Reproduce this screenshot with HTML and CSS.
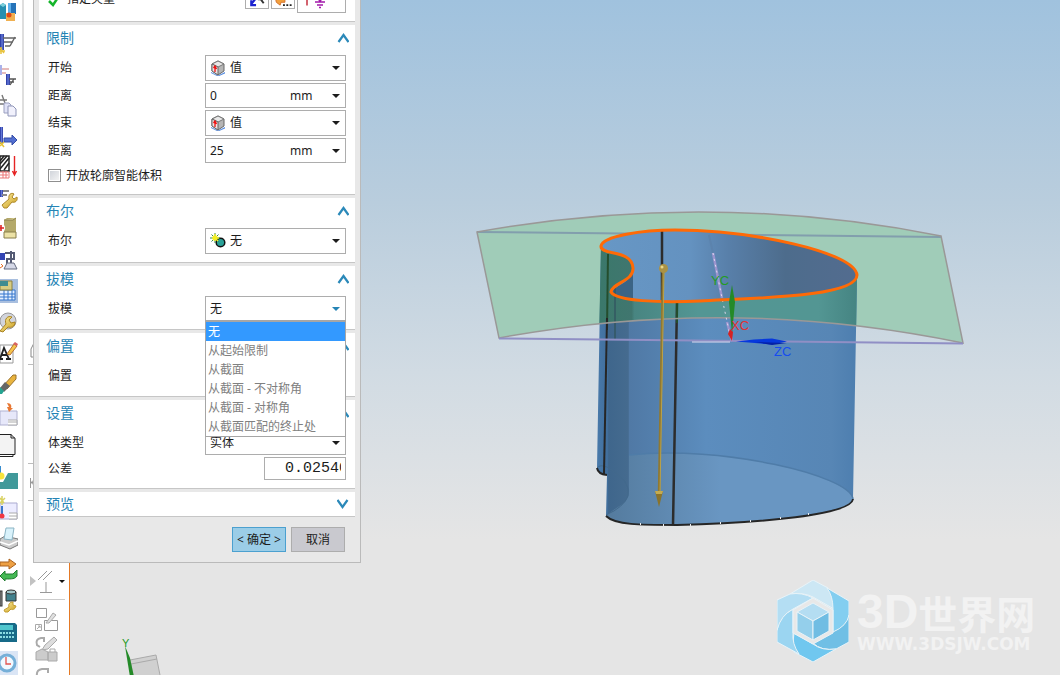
FILE: index.html
```html
<!DOCTYPE html>
<html lang="zh-CN">
<head>
<meta charset="utf-8">
<title>拉伸</title>
<link rel="stylesheet" href="styles.css">
</head>
<body>
<svg class="defs" aria-hidden="true">
  <defs>
    <linearGradient id="metal" x1="0" x2="1"><stop offset="0" stop-color="#20309a"/><stop offset=".5" stop-color="#6478d8"/><stop offset="1" stop-color="#28389c"/></linearGradient>
    <linearGradient id="gold" x1="0" y1="0" x2="1" y2="1"><stop offset="0" stop-color="#fff2a8"/><stop offset="1" stop-color="#c89a18"/></linearGradient>
    <symbol id="arrow" viewBox="0 0 8 4"><path d="M0 0h8L4 4z" fill="currentColor"/></symbol>
    <symbol id="chevron" viewBox="0 0 12 10"><path d="M1.500 9 6.500 2l5 7" fill="none" stroke="#2b89b9" stroke-width="2.2"/></symbol>
    <symbol id="cube" viewBox="0 0 14 16"><path d="M0 12 7 15.500 14 12v1.500L7 16.500 0 13z" fill="#5a8ee0"/><path d="M1 4 7 1l6 3v7l-6 4-6-4z" fill="#b5b5b5" stroke="#666"/><path d="M1 4 7 1l6 3-6 3z" fill="#e8e8e8" stroke="#777"/><path d="M1 4l6 3v8l-6-4z" fill="#f0e2e2" stroke="#666"/><path d="M4 12V6M2.500 8 4 6l1.500 3" stroke="#e11" fill="none" stroke-width="1.300"/></symbol>
    <symbol id="spark" viewBox="0 0 16 16"><circle cx="10.500" cy="9.500" r="4.300" fill="#2aa198" stroke="#111" stroke-width="1.500"/><path d="M5 0v10M0 5h10M1.500 1.500l7 7M8.500 1.500l-7 7" stroke="#368a4a" stroke-width="1"/><path d="M5 1v7M2 5h7M3 3l5 5M7 3 3 7" stroke="#f4ee20" stroke-width="1.500"/></symbol>
  </defs>
</svg>
<div class="app">
  <nav class="toolbar" aria-label="特征">
    <button aria-label="特征 1"><svg viewBox="0 0 18 24"><path d="M0 5l3-2 3 2v14H0z" fill="#278fb0"/><path d="M0 5l3-2 3 2-3 2z" fill="#7cd0dc"/><path d="M8 3h8v11H8z" fill="#2673b8"/><path d="M8 3h3v11H8z" fill="#5eb0ea"/><path d="M6 13h9v8H6z" fill="#f0b050"/><circle cx="9" cy="15" r="2.500" fill="#e04818"/></svg></button>
    <button aria-label="特征 2"><svg viewBox="0 0 18 24"><path d="M0 3h4v16H0z" fill="url(#metal)"/><path d="M3 7h13M4 11h9M5 15h5M15 6l-5 9" stroke="#666" fill="none" stroke-width="1.500"/><path d="M1 16v7M0 20h5M0 17l4 5" stroke="#e8c23a" stroke-width="1.500"/></svg></button>
    <button aria-label="特征 3"><svg viewBox="0 0 18 24"><path d="M0 3h2v10H0z" fill="#aab2ea"/><path d="M2 7h7M2 11h4" stroke="#cc7878"/><path d="M6 12h4v11H6z" fill="url(#metal)"/><path d="M9 17h7M10 20h4M14 17l-4 6" stroke="#555" stroke-width="1.300"/></svg></button>
    <button aria-label="特征 4"><svg viewBox="0 0 18 24"><path d="M0 7h7M0 11h5M2 2l3 8" stroke="#777" stroke-width="1.400"/><path d="M4 10h5l2 2v8H4z" fill="#e0e2f6" stroke="#9ba0bf"/><path d="M8 13h5l3 3v7H8z" fill="#f1f1fc" stroke="#8f95b8"/></svg></button>
    <button aria-label="特征 5"><svg viewBox="0 0 18 24"><path d="M0 3h3v17H0z" fill="url(#metal)"/><path d="M4 14h8v-3l5 5-5 5v-3H4z" fill="#526fd0" stroke="#344da8"/><path d="M0 18l4 5M0 22l4-4" stroke="#e7c235" stroke-width="1.500"/></svg></button>
    <button aria-label="特征 6"><svg viewBox="0 0 18 24"><path d="M0 1h9v15H0z" fill="#fff" stroke="#222" stroke-width="1.500"/><path d="M0 9 7 1M0 14 9 3M4 15l5-7M0 6l4-5" stroke="#222" stroke-width="1.500"/><path d="M0 17h9v6H0M0 20h8M3 16v7M6 16v7" stroke="#ed7777" fill="none"/><path d="M14.500 1v18M12.500 16l2 4 2-4" stroke="#e62424" fill="none" stroke-width="1.400"/></svg></button>
    <button aria-label="特征 7"><svg viewBox="0 0 18 24"><path d="M0 4h3v7H0z" fill="url(#metal)"/><path d="M3 5h6M2 9h5" stroke="#888" stroke-width="2"/><path d="M4 22l-2-3 7-6c-1-4 2-7 5-5l-2 3 2 2 3-2c1 4-2 6-5 5l-5 6z" fill="url(#gold)" stroke="#ad8829"/></svg></button>
    <button aria-label="特征 8"><svg viewBox="0 0 18 24"><path d="M4 3l3-2h9v18H4z" fill="#b4a96a"/><path d="M4 3h9l3-2M4 15h12v6H4z" fill="#ece2a6" stroke="#887e4c"/><circle cx="1" cy="11" r="4" fill="#fff"/><path d="M0 11h4M1 8v6" stroke="#dc2525" stroke-width="1.600"/></svg></button>
    <button aria-label="特征 9"><svg viewBox="0 0 18 24"><path d="M0 5h5v7H0z" fill="#3345b4"/><path d="M5 5h9v6H7v6M11 3v12" stroke="#555b74" fill="none" stroke-width="2"/><path d="M7 15h7l3 6H4z" fill="#d6d9e8" stroke="#666c80"/><path d="M0 20l3-2-2-2" stroke="#e66f27" fill="none"/></svg></button>
    <button aria-label="特征 10"><svg viewBox="0 0 18 24"><path d="M0 0h18v24H0z" fill="#a9bfdf"/><path d="M0 11h15v10H0M4 10v11M8 10v11M12 10v11M0 15h15M0 18h15" stroke="#3275cc" fill="#e5f0ff"/><path d="M0 2h12v9H0z" fill="#d8cd82" stroke="#8c8043"/><path d="M0 2h8v5H0z" fill="#3f8c90"/></svg></button>
    <button aria-label="特征 11"><svg viewBox="0 0 18 24"><circle cx="8" cy="11" r="8" fill="#d2d4dc" stroke="#999"/><path d="M0 21l6-7c-2-5 2-9 6-7L9 10l2 3 4-1c0 5-4 6-7 5l-5 5z" fill="url(#gold)" stroke="#aa8424"/></svg></button>
    <button aria-label="文本"><svg viewBox="0 0 18 24"><path d="M0 4h13v18H0z" fill="#fff" stroke="#999"/><path d="M0 18 4 7l5 11M1 14h6M-1 18h4M6 18h5" stroke="#222" fill="none" stroke-width="1.800"/><path d="M7 13 14 3l3 2-7 9z" fill="#f5c44b" stroke="#b86f32"/><path d="M13 3l2-2 3 2-1 2z" fill="#d86262"/></svg></button>
    <button aria-label="编辑"><svg viewBox="0 0 18 24"><path d="M3 14 13 3l3 0 0 4L7 17z" fill="#e9b43f" stroke="#9b722c"/><path d="M0 16 5 10l5 4-6 6z" fill="#666"/><path d="M0 15l4 4-2 3H0z" fill="#25a491"/></svg></button>
    <button aria-label="特征 14"><svg viewBox="0 0 18 24"><path d="M0 8h17v14H0z" fill="#e7e8fa" stroke="#b0b1d1"/><path d="M8 17h9v5H8M8 19h9" fill="#fff" stroke="#aaa"/><path d="M7 0c4 0 5 3 4 5h2l-4 4-2-5h2z" fill="#e87834"/></svg></button>
    <button aria-label="图纸"><svg viewBox="0 0 18 24"><path d="M0 .5h11l4 4v16H0" fill="#f3f3f3" stroke="#222"/><path d="M0 22.500h13v-2M11 0v4h4" fill="none" stroke="#222"/></svg></button>
    <button aria-label="特征 16"><svg viewBox="0 0 18 24"><path d="M0 24v-7h3l5-9h10v16z" fill="#40999a"/><path d="M0 1v8" stroke="#378ccf" stroke-width="2"/><circle cx="1" cy="11" r="3.500" fill="#f6e43c"/></svg></button>
    <button aria-label="特征 17"><svg viewBox="0 0 18 24"><path d="M0 7h17v16H0z" fill="#ececff" stroke="#aaaad0"/><path d="M9 17h8v6H9M9 20h8" fill="#fff" stroke="#aaa"/><path d="M2 10v9" stroke="#3976cc" stroke-width="2"/><circle cx="2" cy="20" r="2.500" fill="#f23443"/><path d="M0 2l4 5M0 7l5-5M2 0v9" stroke="#d9d261" stroke-width="1.500"/></svg></button>
    <button aria-label="打印"><svg viewBox="0 0 18 24"><path d="M0 12l5-3 13 3v6l-8 4-10-4z" fill="#ccc" stroke="#777"/><path d="M4 12 6 1h8l-2 12z" fill="#d9f2fb" stroke="#8bb4c4"/><path d="M0 15l9 3 9-4" stroke="#fff" stroke-width="1.500" fill="none"/></svg></button>
    <button aria-label="替换"><svg viewBox="0 0 18 24"><path d="M0 4h9V1l7 5-7 5V8H0z" fill="#eda044" stroke="#aa6320"/><path d="M17 12v6c-2 3-5 3-12 3v2l-5-5 5-5v3h8z" fill="#45b955" stroke="#207c30"/></svg></button>
    <button aria-label="特征 20"><svg viewBox="0 0 18 24"><rect y="2" width="2" height="15" fill="#999" stroke="#333"/><path d="M6 3h10v9H6z" fill="#42818d" stroke="#333"/><ellipse cx="11" cy="3" rx="5" ry="2" fill="#a3c6c9" stroke="#333"/><path d="M5 23l-1-2 5-3c-1-3 1-5 4-5v3l3 1c-1 4-4 4-5 3l-3 3z" fill="url(#gold)" stroke="#c39d2f"/></svg></button>
    <button aria-label="表达式"><svg viewBox="0 0 18 24"><path d="M0 3h15l2 2v17H0z" fill="#176a88"/><path d="M0 5h13v5H0z" fill="#50c6ce"/><path d="M0 13h15M0 17h15" stroke="#8adbe2" stroke-width="2" stroke-dasharray="2 1"/></svg></button>
    <button aria-label="历史"><svg viewBox="0 0 18 24"><path d="M0 0h18v24H0z" fill="#dae5f5"/><circle cx="7" cy="12" r="8" fill="#f1f9ff" stroke="#75afd8" stroke-width="3"/><path d="M6 6v7h5" stroke="#e25550" fill="none" stroke-width="1.300"/></svg></button>
  </nav>
  <div class="sketchbar">
    <svg class="sketch-back" viewBox="0 0 46 563"><g fill="none" stroke="#bcbcbc"><path d="M20 341h-7q-4 2-6 8v8h12" stroke="#888"/><path d="M4 364.500h20M4 463.500h20M4 500.500h20"/><path d="M6.500 478v10M7 482.500h5M10 480l-3 2.500 3 2.500" stroke="#999"/></g></svg>
    <button class="constraint" aria-label="几何约束"><svg viewBox="0 0 40 34"><path d="M2 13v10l6-5z" fill="#c2c2c2"/><path d="M10 17 19 8M15 17 24 8M18 19v10M12 29.500h12" fill="none" stroke="#999"/><path d="M31 17h6l-3 3z" fill="#111"/></svg></button>
    <hr>
    <button class="tool" aria-label="阵列曲线"><svg viewBox="0 0 26 28"><path d="M3.500 4.500h10v9h-10zM11.500 16.500h13v10h-13z" fill="#fff" stroke="#999"/><path d="M2.500 20.500h6v6h-6zM4 25l3-3M5 22h2v2" fill="none" stroke="#aaa"/><path d="M13 19 20 9l3 2-7 8z" fill="#e0e0e0" stroke="#aaa"/></svg></button>
    <button class="tool" aria-label="偏置曲线"><svg viewBox="0 0 26 28"><path d="M11 7V3H8q-6 1-4 7l3 2" stroke="#aaa" fill="none" stroke-width="2"/><path d="M12 10 21 2l3 3-9 9-6 1z" fill="#ddd" stroke="#aaa"/><path d="M3 17l6-3 6 3v8H3zM15 17h9v9h-9z" fill="#ccc" stroke="#aaa"/><path d="M17 17v-3h5v3" fill="none" stroke="#aaa"/></svg></button>
    <button class="tool" aria-label="镜像曲线"><svg viewBox="0 0 26 28"><path d="M15 7V3H9q-6 1-5 7" stroke="#aaa" fill="none" stroke-width="2"/></svg></button>
  </div>
  <main class="viewport">
    <svg class="scene" viewBox="70 0 990 675" preserveAspectRatio="xMinYMin slice" role="img" aria-label="拉伸预览">
      <defs>
        <linearGradient id="wall" gradientUnits="userSpaceOnUse" x1="597" x2="857" y1="0" y2="0"><stop offset="0" stop-color="#4879aa"/><stop offset=".04" stop-color="#416f9d"/><stop offset=".045" stop-color="#3f668c"/><stop offset=".12" stop-color="#456b8f"/><stop offset=".125" stop-color="#5079a5"/><stop offset=".3" stop-color="#5684b3"/><stop offset=".42" stop-color="#5c8dbe"/><stop offset=".9" stop-color="#5786b5"/><stop offset="1" stop-color="#4d7eaf"/></linearGradient>
        <linearGradient id="inside" gradientUnits="userSpaceOnUse" x1="601" x2="857" y1="0" y2="0"><stop offset="0" stop-color="#6797c5"/><stop offset=".35" stop-color="#6492c0"/><stop offset=".5" stop-color="#587fa9"/><stop offset=".72" stop-color="#4d6c8c"/><stop offset="1" stop-color="#536c8f"/></linearGradient>
        <linearGradient id="teal" gradientUnits="userSpaceOnUse" x1="601" x2="857" y1="0" y2="0"><stop offset="0" stop-color="#3b786b"/><stop offset=".12" stop-color="#40766f"/><stop offset=".13" stop-color="#488581"/><stop offset=".38" stop-color="#539694"/><stop offset=".85" stop-color="#539693"/><stop offset="1" stop-color="#458482"/></linearGradient>
        <linearGradient id="floor" gradientUnits="userSpaceOnUse" x1="607" x2="720" y1="0" y2="0"><stop offset="0" stop-color="#547b9e"/><stop offset="1" stop-color="#6996c2"/></linearGradient>
        <clipPath id="plane"><path d="M477 232Q710 190 941 236L963 343Q730 295 499 338Z"/></clipPath>
      </defs>
      <path d="M477 232Q710 190 941 236L963 343Q730 295 499 338Z" fill="#a0ccb8"/>
      <path d="M477 232 941 237" stroke="#829ead" stroke-width="2"/>
      <path d="M601 246 597 468Q598 474 607 475L606 516C615 525 640 525 677 525C760 523 851 515 853 499L857 275C840 300 650 310 634 292L634 256Z" fill="url(#wall)"/>
      <path d="M629 455C720 445 850 475 853 499C851 515 760 523 677 525C640 525 615 525 606 516C615 507 629 504 629 492Z" fill="url(#floor)"/>
      <path d="M597 468q3-4 10-1 25 14 21 29-4 11-22 19" fill="none" stroke="#42698c"/>
      <path d="M629 455C720 445 850 475 853 499" fill="none" stroke="#4f7ca8" stroke-width="1.500"/>
      <g clip-path="url(#plane)"><path d="M601 246 599 340H856L857 275C840 300 650 310 634 292L634 256Z" fill="url(#teal)"/></g>
      <path d="M601 246C603 236 642 230 675 230C750 230 855 252 857 275C857 297 755 298 700 301C660 303 616 301 611 292C612 283 634 281 633 268C632 249 600 256 601 246Z" fill="url(#inside)"/>
      <path d="M633 268q-1 11-13 17-10 5-8 9 5 5 21 7z" fill="#3c6485"/>
      <path d="M608 254 607 330" stroke="#244e2e" stroke-width="2"/><path d="M607 318 604 474" stroke="#262626" stroke-width="2"/>
      <path d="M615 288v52" stroke="#335762" stroke-width="1.500"/>
      <path d="M662 231v70M677 303l-1 55-3 167" stroke="#2c2c2c" stroke-width="2.500" fill="none"/>
      <path d="M677 303v20" stroke="#244c2c" stroke-width="2"/>
      <path d="M597 468Q598 474 607 475M606 516C615 525 640 525 677 525C760 523 851 515 853 499" fill="none" stroke="#262626" stroke-width="2"/>
      <path d="M640 524h1M663 525h1M690 525h1M720 523h1M750 521h1M780 518h1M808 514h1" stroke="#eee" stroke-width="2"/>
      <path d="M477 232Q710 190 941 236L963 343Q730 295 499 338Z" fill="none" stroke="#9a9897" stroke-width="1.500"/>
      <path d="M499 338.500 963 343.500" stroke="#908fc5" stroke-width="2"/>
      <path d="M692 342h38" stroke="#ddd9ef"/>
      <path d="M709 235l4 18" stroke="#5c83ad" stroke-width="2"/><path d="M713 253l9 45M727 322l5 19" stroke="#9b94ce" stroke-width="2.500"/><path d="M713 253l9 45 9 42" stroke="#ddd8ee" stroke-dasharray="2 4" fill="none"/>
      <path d="M601 246C603 236 642 230 675 230C750 230 855 252 857 275C857 297 755 298 700 301C660 303 616 301 611 292C612 283 634 281 633 268C632 249 600 256 601 246Z" fill="none" stroke="#ff6a06" stroke-width="3"/>
      <path d="M663 270l-4 224" stroke="#907932" stroke-width="2.500"/><path d="M664 270l-4 224" stroke="#bba248"/>
      <circle cx="663.500" cy="268.500" r="4.500" fill="#aa9245"/><circle cx="662" cy="267" r="1.500" fill="#ead78b"/><path d="M655 491h8l-4 16z" fill="#8a732b"/><path d="M655 491h8l-1 3h-6z" fill="#c4ab50"/>
      <path d="M732 285l3 17-3 32-3-32z" fill="#248a28"/><path d="M728 334l2-5 3 3-1 9z" fill="#d52222"/>
      <path d="M736 341.500l18-2 18-1 15 3-15 3z" fill="#0638dd"/><path d="M755 342l32 1-15 2z" fill="#0521a6"/>
      <g class="axis"><text x="711" y="285" fill="#259b25">YC</text><text x="731" y="330" fill="#e13232">XC</text><text x="774" y="356" fill="#164cf0">ZC</text></g>
      <path d="M130 660l26-5 5 25h-27z" fill="#d0d0d0" stroke="#aaa"/><path d="M131 664l26-5" stroke="#aaa"/>
      <path d="M125 646l5 12 4 19h-4z" fill="#248a28"/><text class="triad" x="122" y="647" fill="#259b25">Y</text>
    </svg>
    <div class="watermark">
      <svg viewBox="0 0 72 82"><g stroke="#e8f3f8" stroke-width="1"><path d="M13 14 36 0l15 8q6 12 6 21L36 17q-10-5-23-3z" fill="#cce7f4"/><path d="M50 8 72 21v26q-3 5-16 9V29q0-13-6-21z" fill="#83cef0"/><path d="M72 35v27L59 69q-15 2-23-6l20-11Q70 46 72 35z" fill="#70bfe5"/><path d="M17 53 36 64q9 7 23 5L36 82 17 72q-2-9 0-19z" fill="#70c7ef"/><path d="M0 51q1-14 16-22v24q-1 11 6 21L0 62z" fill="#9bd5f1"/><path d="M0 20l13-6q12-2 23 4L16 29Q4 35 0 50z" fill="#b4def3"/><path d="M36 18 56 30v23L36 64 16 53V30z" fill="#e8e8e8"/><path d="M20 32 36 23l16 9-16 9z" fill="#b4ddf2"/><path d="M20 32l16 9v19l-16-9z" fill="#94cfeb"/><path d="M36 41l16-9v19l-16 9z" fill="#70bde3"/></g></svg>
      <div class="brand"><div class="brand-name"><b>3D</b><span>世界网</span></div><div class="brand-url">WWW.3DSJW.COM</div></div>
    </div>
  </main>

  <form class="dialog" aria-label="拉伸">
    <section class="panel direction">
      <div class="row">
        <span class="vector-label"><svg viewBox="0 0 12 12"><path d="M1 6l4 4 6-9" stroke="#15b52a" stroke-width="2.500" fill="none"/></svg>指定矢量</span>
        <div class="vector-tools">
          <button type="button" aria-label="反向"><svg viewBox="0 0 22 22"><path d="M5 18 12 9M5 14v5h5" stroke="#1b22d0" stroke-width="2.300" fill="none"/><path d="M12 13h5M15 13l3 4" stroke="#333" stroke-width="2"/></svg></button>
          <button type="button" aria-label="矢量对话框"><svg viewBox="0 0 22 22"><path d="M3 11h10v5H9l-1 3-4-3z" fill="#f2a03d" stroke="#d4702d"/><path d="M11 19h2M14.500 19h2M18 19h2" stroke="#222" stroke-width="2"/></svg></button>
          <button type="button" class="vector-type" aria-label="矢量类型"><svg viewBox="0 0 47 24"><path d="M9 8v10" stroke="#c52e3e" stroke-width="1.500"/><path d="M22 8v6M17 14.500h10M19 17.500h6M21 20h2M20 11l2 3 2-3" stroke="#a21aab" stroke-width="1.300" fill="none"/></svg></button>
        </div>
      </div>
    </section>
    <section class="panel limits">
      <h2>限制<button type="button" aria-label="折叠限制"><svg><use href="#chevron"/></svg></button></h2>
      <div class="rows">
        <div class="row"><label for="start">开始</label><div class="field"><svg class="kind"><use href="#cube"/></svg><select id="start"><option>值</option></select><svg class="caret"><use href="#arrow"/></svg></div></div>
        <div class="row short"><label for="d1">距离</label><div class="field"><input id="d1" value="0"><select class="unit" aria-label="单位"><option>mm</option></select><svg class="caret"><use href="#arrow"/></svg></div></div>
        <div class="row"><label for="end">结束</label><div class="field"><svg class="kind"><use href="#cube"/></svg><select id="end"><option>值</option></select><svg class="caret"><use href="#arrow"/></svg></div></div>
        <div class="row short"><label for="d2">距离</label><div class="field"><input id="d2" value="25"><select class="unit" aria-label="单位"><option>mm</option></select><svg class="caret"><use href="#arrow"/></svg></div></div>
      </div>
      <label class="check"><input type="checkbox">开放轮廓智能体积</label>
    </section>
    <section class="panel">
      <h2>布尔<button type="button" aria-label="折叠布尔"><svg><use href="#chevron"/></svg></button></h2>
      <div class="row"><label for="bool">布尔</label><div class="field"><svg class="kind"><use href="#spark"/></svg><select id="bool"><option>无</option></select><svg class="caret"><use href="#arrow"/></svg></div></div>
    </section>
    <section class="panel">
      <h2>拔模<button type="button" aria-label="折叠拔模"><svg><use href="#chevron"/></svg></button></h2>
      <div class="row short"><label for="draft">拔模</label><div class="field open"><select id="draft"><option>无</option></select><svg class="caret"><use href="#arrow"/></svg>
        <ul class="menu" role="listbox" aria-label="拔模"><li role="option" aria-selected="true">无</li><li role="option">从起始限制</li><li role="option">从截面</li><li role="option">从截面 - 不对称角</li><li role="option">从截面 - 对称角</li><li role="option">从截面匹配的终止处</li></ul></div></div>
    </section>
    <section class="panel">
      <h2>偏置<button type="button" aria-label="折叠偏置"><svg><use href="#chevron"/></svg></button></h2>
      <div class="row short"><label for="offset">偏置</label><div class="field"><select id="offset"><option></option></select><svg class="caret"><use href="#arrow"/></svg></div></div>
    </section>
    <section class="panel">
      <h2>设置<button type="button" aria-label="折叠设置"><svg><use href="#chevron"/></svg></button></h2>
      <div class="rows">
        <div class="row short"><label for="type">体类型</label><div class="field"><select id="type"><option>实体</option></select><svg class="caret"><use href="#arrow"/></svg></div></div>
        <div class="row tolerance"><label for="tol">公差</label><input id="tol" value="0.02540"></div>
      </div>
    </section>
    <section class="panel preview"><h2>预览<button type="button" aria-label="展开预览"><svg class="down"><use href="#chevron"/></svg></button></h2></section>
    <footer><button type="submit" class="ok">&lt; 确定 &gt;</button><button type="button" class="cancel">取消</button></footer>
  </form>
</div>
</body>
</html>
```
FILE: styles.css
```css
* { box-sizing: border-box; }
body { margin: 0; font: 12px/16px "Noto Sans", "Noto Sans CJK SC", sans-serif; color: #1c1c1c; }
button, input, select { font: inherit; color: inherit; margin: 0; }
button { padding: 0; border: 0; background: none; }
svg { display: block; }
.defs { position: absolute; width: 0; height: 0; }
.app { position: relative; display: grid; grid-template-columns: 24px 46px 1fr; grid-template-rows: 100vh; height: 100vh; overflow: hidden; background: #fff; }

.toolbar { display: flex; flex-direction: column; align-items: flex-start; margin-top: -4px; border-right: 2px solid #dedede; }
.toolbar button { display: flex; align-items: center; flex: 0 0 31px; }
.toolbar svg { width: 18px; height: 24px; }

.sketchbar { border-right: 1px solid #e47925; min-height: 0; }
.sketch-back { width: 46px; height: 563px; }
.constraint svg { width: 40px; height: 34px; margin-left: 4px; }
.sketchbar hr { margin: 2px 4px 4px 3px; border: 0; border-top: 1px solid #ccc; }
.sketchbar button { display: block; }
.tool svg { width: 26px; height: 28px; margin: 0 0 3px 9px; }

.viewport { position: relative; min-width: 0; overflow: hidden; background: linear-gradient(#a0c2de, #b9cddd 30%, #d1dbe3 55%, #e5e5e5 80%); }
.scene { width: 100%; height: 100%; }
.axis { font: 13px "Liberation Sans", sans-serif; }
.triad { font: 11px "Liberation Sans", sans-serif; }
.watermark { position: absolute; right: 24px; bottom: 13px; display: flex; gap: 8px; color: #f2f2f2; }
.watermark > svg { width: 72px; height: 82px; }
.brand { width: 179px; padding-top: 10px; white-space: nowrap; }
.brand-name { display: flex; align-items: center; height: 44px; font: bold 39px/40px "Noto Sans CJK SC", sans-serif; }
.brand-name b { font: bold 48px/44px "Liberation Sans", sans-serif; }
.brand-url { font: bold 17px/20px "DejaVu Sans", sans-serif; }

.dialog { position: absolute; left: 33px; top: 0; width: 328px; padding: 0 5px 10px; display: flex; flex-direction: column; gap: 3px; background: #e8e8e8; border: 1px solid #bababa; border-top: 0; }
.panel { background: #fff; border-bottom: 1px solid #c6c6c6; padding: 0 9px 8px; }
.panel h2 { display: flex; align-items: center; justify-content: space-between; margin: 0 -4px 0 -2px; height: 30px; padding-bottom: 4px; font-size: 14px; font-weight: 400; line-height: 20px; color: #2584b5; }
.panel h2 svg { width: 12px; height: 10px; margin-right: 1px; }
.panel h2 .down { transform: rotate(180deg); }
.rows { display: flex; flex-direction: column; gap: 2px; }
.row { display: flex; justify-content: space-between; align-items: center; height: 26px; }
.row.short { height: 25px; }
.field { position: relative; display: flex; align-items: center; width: 141px; height: 100%; padding: 0 5px 0 4px; border: 1px solid #adadad; background: #fff; }
.field select, .field input { appearance: none; flex: 1; min-width: 0; height: 100%; padding: 0; border: 0; background: none; outline: 0; }
.field .unit { flex: 0 0 42px; }
.kind { width: 16px; height: 16px; margin: 0 4px 0 0; }
.caret { width: 8px; height: 4px; color: #1c1c1c; }
.open .caret { color: #2584b5; }
.menu { position: absolute; z-index: 2; left: -1px; right: -1px; top: 100%; margin: 0; padding: 0; list-style: none; background: #fff; border: 1px solid #a6a6a6; border-top-width: 2px; color: #808080; }
.menu li { height: 19px; padding-left: 2px; line-height: 19px; white-space: nowrap; }
.menu li[aria-selected] { background: #3399ff; color: #fff; }
.check { display: flex; align-items: center; gap: 5px; height: 25px; }
.check input { appearance: none; width: 13px; height: 13px; border: 1px solid #8f8f8f; background: linear-gradient(135deg, #cdd1d8, #f6f6f6); outline: 1px solid #fff; outline-offset: -2px; }
.direction { height: 22px; overflow: hidden; padding-bottom: 0; }
.direction .row { margin-top: -14px; }
.vector-label, .vector-tools { display: flex; }
.vector-label { gap: 7px; }
.vector-label svg { width: 12px; height: 12px; margin-top: 4px; }
.vector-tools { gap: 2px; align-items: flex-start; }
.vector-tools button { width: 24px; height: 23px; border: 1px solid #adadad; }
.vector-tools button svg { width: 22px; height: 21px; }
.vector-tools .vector-type { width: 49px; height: 27px; }
.vector-tools .vector-type svg { width: 47px; height: 25px; }
.limits { padding-bottom: 6px; }
.tolerance { height: 23px; }
.tolerance input { width: 82px; height: 23px; padding: 0 4px 0 20px; border: 1px solid #adadad; font: 15px/21px "Liberation Mono", monospace; outline: 0; }
.preview { padding-bottom: 0; }
.preview h2 { height: 24px; padding-bottom: 0; }
footer { display: flex; justify-content: flex-end; gap: 5px; padding: 7px 10px 0 0; }
footer button { width: 54px; height: 25px; border: 1px solid #adadad; background: #c9c9cf; }
footer .ok { border-color: #4ba0cf; background: #9bcde7; }
```
